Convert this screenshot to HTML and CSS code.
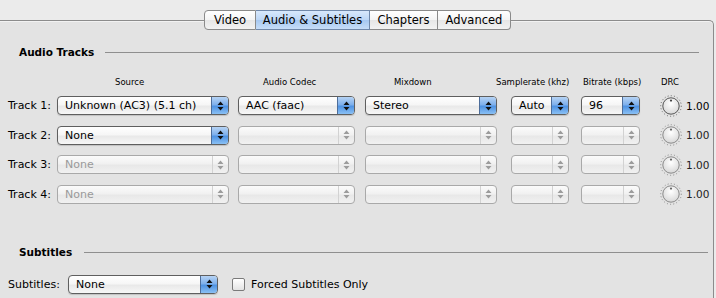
FILE: index.html
```html
<!DOCTYPE html>
<html lang="en">
<head>
    <meta charset="UTF-8">
    <title>Audio &amp; Subtitles</title>
    <link rel="stylesheet" href="styles.css">
</head>
<body>
    <div class="tabs">
        <span class="tab">Video</span>
        <span class="tab selected">Audio &amp; Subtitles</span>
        <span class="tab">Chapters</span>
        <span class="tab">Advanced</span>
    </div>

    <div class="panel">
        <div class="section-title audio-title">
            <span>Audio Tracks</span>
            <div class="rule"></div>
        </div>

        <div class="track-grid headers">
            <span></span>
            <span class="h-source">Source</span>
            <span class="h-codec">Audio Codec</span>
            <span class="h-mix">Mixdown</span>
            <span class="h-rate">Samplerate (khz)</span>
            <span class="h-bitrate">Bitrate (kbps)</span>
            <span class="h-drc">DRC</span>
        </div>

        <div class="track-grid tracks">
            <!-- Track 1 -->
            <span class="track-label">Track 1:</span>
            <div class="popup w-source"><span class="value">Unknown (AC3) (5.1 ch)</span><span class="arrows"><svg width="7" height="10" viewBox="0 0 7 10"><path d="M3.5 0.5L6.5 4H0.5Z M3.5 9.5L6.5 6H0.5Z"/></svg></span></div>
            <div class="popup w-codec"><span class="value">AAC (faac)</span><span class="arrows"><svg width="7" height="10" viewBox="0 0 7 10"><path d="M3.5 0.5L6.5 4H0.5Z M3.5 9.5L6.5 6H0.5Z"/></svg></span></div>
            <div class="popup w-mix"><span class="value">Stereo</span><span class="arrows"><svg width="7" height="10" viewBox="0 0 7 10"><path d="M3.5 0.5L6.5 4H0.5Z M3.5 9.5L6.5 6H0.5Z"/></svg></span></div>
            <div class="popup w-rate"><span class="value">Auto</span><span class="arrows"><svg width="7" height="10" viewBox="0 0 7 10"><path d="M3.5 0.5L6.5 4H0.5Z M3.5 9.5L6.5 6H0.5Z"/></svg></span></div>
            <div class="popup w-bitrate"><span class="value">96</span><span class="arrows"><svg width="7" height="10" viewBox="0 0 7 10"><path d="M3.5 0.5L6.5 4H0.5Z M3.5 9.5L6.5 6H0.5Z"/></svg></span></div>
            <div class="drc">
                <svg class="knob" width="22" height="22" viewBox="0 0 22 22"><defs><radialGradient id="knobfill" cx="0.5" cy="0.35" r="0.7"><stop offset="0" stop-color="#ffffff"/><stop offset="1" stop-color="#d4d4d4"/></radialGradient></defs><circle cx="11" cy="11" r="10.3" fill="none" stroke="#666" stroke-width="1" stroke-dasharray="1 2.2"/><circle cx="11" cy="11" r="8.2" fill="url(#knobfill)" stroke="#555" stroke-width="1"/><circle cx="11" cy="5.6" r="1.1" fill="#444"/></svg>
                <span>1.00</span>
            </div>

            <!-- Track 2 -->
            <span class="track-label">Track 2:</span>
            <div class="popup w-source"><span class="value">None</span><span class="arrows"><svg width="7" height="10" viewBox="0 0 7 10"><path d="M3.5 0.5L6.5 4H0.5Z M3.5 9.5L6.5 6H0.5Z"/></svg></span></div>
            <div class="popup w-codec disabled"><span class="value"></span><span class="arrows"><svg width="7" height="10" viewBox="0 0 7 10"><path d="M3.5 0.5L6.5 4H0.5Z M3.5 9.5L6.5 6H0.5Z"/></svg></span></div>
            <div class="popup w-mix disabled"><span class="value"></span><span class="arrows"><svg width="7" height="10" viewBox="0 0 7 10"><path d="M3.5 0.5L6.5 4H0.5Z M3.5 9.5L6.5 6H0.5Z"/></svg></span></div>
            <div class="popup w-rate disabled"><span class="value"></span><span class="arrows"><svg width="7" height="10" viewBox="0 0 7 10"><path d="M3.5 0.5L6.5 4H0.5Z M3.5 9.5L6.5 6H0.5Z"/></svg></span></div>
            <div class="popup w-bitrate disabled"><span class="value"></span><span class="arrows"><svg width="7" height="10" viewBox="0 0 7 10"><path d="M3.5 0.5L6.5 4H0.5Z M3.5 9.5L6.5 6H0.5Z"/></svg></span></div>
            <div class="drc off">
                <svg class="knob" width="22" height="22" viewBox="0 0 22 22"><circle cx="11" cy="11" r="10.3" fill="none" stroke="#888" stroke-width="1" stroke-dasharray="1 2.2"/><circle cx="11" cy="11" r="8.2" fill="url(#knobfill)" stroke="#8a8a8a" stroke-width="1"/><circle cx="11" cy="5.6" r="1.1" fill="#666"/></svg>
                <span>1.00</span>
            </div>

            <!-- Track 3 -->
            <span class="track-label">Track 3:</span>
            <div class="popup w-source disabled"><span class="value">None</span><span class="arrows"><svg width="7" height="10" viewBox="0 0 7 10"><path d="M3.5 0.5L6.5 4H0.5Z M3.5 9.5L6.5 6H0.5Z"/></svg></span></div>
            <div class="popup w-codec disabled"><span class="value"></span><span class="arrows"><svg width="7" height="10" viewBox="0 0 7 10"><path d="M3.5 0.5L6.5 4H0.5Z M3.5 9.5L6.5 6H0.5Z"/></svg></span></div>
            <div class="popup w-mix disabled"><span class="value"></span><span class="arrows"><svg width="7" height="10" viewBox="0 0 7 10"><path d="M3.5 0.5L6.5 4H0.5Z M3.5 9.5L6.5 6H0.5Z"/></svg></span></div>
            <div class="popup w-rate disabled"><span class="value"></span><span class="arrows"><svg width="7" height="10" viewBox="0 0 7 10"><path d="M3.5 0.5L6.5 4H0.5Z M3.5 9.5L6.5 6H0.5Z"/></svg></span></div>
            <div class="popup w-bitrate disabled"><span class="value"></span><span class="arrows"><svg width="7" height="10" viewBox="0 0 7 10"><path d="M3.5 0.5L6.5 4H0.5Z M3.5 9.5L6.5 6H0.5Z"/></svg></span></div>
            <div class="drc off">
                <svg class="knob" width="22" height="22" viewBox="0 0 22 22"><circle cx="11" cy="11" r="10.3" fill="none" stroke="#888" stroke-width="1" stroke-dasharray="1 2.2"/><circle cx="11" cy="11" r="8.2" fill="url(#knobfill)" stroke="#8a8a8a" stroke-width="1"/><circle cx="11" cy="5.6" r="1.1" fill="#666"/></svg>
                <span>1.00</span>
            </div>

            <!-- Track 4 -->
            <span class="track-label">Track 4:</span>
            <div class="popup w-source disabled"><span class="value">None</span><span class="arrows"><svg width="7" height="10" viewBox="0 0 7 10"><path d="M3.5 0.5L6.5 4H0.5Z M3.5 9.5L6.5 6H0.5Z"/></svg></span></div>
            <div class="popup w-codec disabled"><span class="value"></span><span class="arrows"><svg width="7" height="10" viewBox="0 0 7 10"><path d="M3.5 0.5L6.5 4H0.5Z M3.5 9.5L6.5 6H0.5Z"/></svg></span></div>
            <div class="popup w-mix disabled"><span class="value"></span><span class="arrows"><svg width="7" height="10" viewBox="0 0 7 10"><path d="M3.5 0.5L6.5 4H0.5Z M3.5 9.5L6.5 6H0.5Z"/></svg></span></div>
            <div class="popup w-rate disabled"><span class="value"></span><span class="arrows"><svg width="7" height="10" viewBox="0 0 7 10"><path d="M3.5 0.5L6.5 4H0.5Z M3.5 9.5L6.5 6H0.5Z"/></svg></span></div>
            <div class="popup w-bitrate disabled"><span class="value"></span><span class="arrows"><svg width="7" height="10" viewBox="0 0 7 10"><path d="M3.5 0.5L6.5 4H0.5Z M3.5 9.5L6.5 6H0.5Z"/></svg></span></div>
            <div class="drc off">
                <svg class="knob" width="22" height="22" viewBox="0 0 22 22"><circle cx="11" cy="11" r="10.3" fill="none" stroke="#888" stroke-width="1" stroke-dasharray="1 2.2"/><circle cx="11" cy="11" r="8.2" fill="url(#knobfill)" stroke="#8a8a8a" stroke-width="1"/><circle cx="11" cy="5.6" r="1.1" fill="#666"/></svg>
                <span>1.00</span>
            </div>
        </div>

        <div class="section-title subs-title">
            <span>Subtitles</span>
            <div class="rule"></div>
        </div>

        <div class="subs-row">
            <span class="subs-label">Subtitles:</span>
            <div class="popup w-subs"><span class="value">None</span><span class="arrows"><svg width="7" height="10" viewBox="0 0 7 10"><path d="M3.5 0.5L6.5 4H0.5Z M3.5 9.5L6.5 6H0.5Z"/></svg></span></div>
            <label class="check"><span class="box"></span>Forced Subtitles Only</label>
        </div>
    </div>
</body>
</html>
```

FILE: styles.css
```css
html, body {
    height: 298px;
    overflow: hidden;
}
body {
    margin: 0;
    background: #ebebeb;
    font-family: 'DejaVu Sans', 'Liberation Sans', sans-serif;
    font-size: 11px;
    color: #000;
}

/* segmented tab control */
.tabs {
    display: flex;
    margin: 10px 0 0 204px;
    height: 20px;
    position: relative;
    z-index: 1;
}
.tab {
    display: flex;
    align-items: center;
    justify-content: center;
    height: 18px;
    border: 1px solid #8a8a8a;
    border-left: none;
    background: linear-gradient(#ffffff 0%, #f4f4f4 50%, #e6e6e6 51%, #f2f2f2 100%);
    font-size: 11.5px;
}
.tab:nth-child(1) { width: 50px; border-left: 1px solid #8a8a8a; border-radius: 4px 0 0 4px; }
.tab:nth-child(2) { width: 113px; }
.tab:nth-child(3) { width: 67px; }
.tab:nth-child(4) { width: 72px; border-radius: 0 4px 4px 0; }
.tab.selected {
    background: linear-gradient(#d8e8fb 0%, #bcd6f6 50%, #a6c8f1 51%, #c6ddf8 100%);
    border-color: #7088aa;
}

/* tab view box */
.panel {
    margin: -10px 2px 0 -10px;
    padding-left: 10px;
    border: 1px solid #8c8c8c;
    border-bottom: none;
    border-radius: 5px 5px 0 0;
    background: #e3e3e3;
    height: 278px;
    box-shadow: inset 0 1px 0 #f2f2f2;
}

.section-title {
    display: flex;
    align-items: center;
    font-weight: bold;
    font-size: 10.5px;
    line-height: 13px;
}
.section-title .rule {
    flex: 1;
    height: 0;
    border-top: 1px solid #8f8f8f;
    margin-left: 11px;
}
.audio-title { padding: 25px 14px 0 18px; }
.subs-title { padding: 42px 5px 0 18px; }
.subs-title .rule { margin-left: 12px; }

/* tracks table */
.track-grid {
    display: grid;
    grid-template-columns: 56px 181px 127px 146px 70px 79px 1fr;
}
.headers {
    margin-top: 16px;
    font-size: 8.5px;
    line-height: 14px;
    white-space: nowrap;
}
.h-source { padding-left: 58px; }
.h-codec { padding-left: 25px; }
.h-mix { padding-left: 29px; }
.h-rate { margin-left: -15px; }
.h-bitrate { padding-left: 2px; }
.h-drc { padding-left: 1px; }

.tracks {
    margin-top: 7px;
    grid-auto-rows: 19px;
    row-gap: 10.5px;
    align-items: center;
}
.track-label {
    text-align: right;
    padding-right: 6px;
    font-size: 11px;
}

/* pop-up buttons */
.popup {
    display: flex;
    height: 17px;
    border: 1px solid #5f5f5f;
    border-radius: 4px;
    background: linear-gradient(#ffffff 0%, #f6f6f6 45%, #e9e9e9 55%, #f7f7f7 100%);
    box-shadow: 0 1px 1px rgba(0,0,0,0.15);
    overflow: hidden;
}
.popup .value {
    flex: 1;
    padding-left: 7px;
    line-height: 17px;
    font-size: 11px;
    white-space: nowrap;
}
.popup .arrows {
    width: 16px;
    display: flex;
    align-items: center;
    justify-content: center;
    border-left: 1px solid #4d6d9a;
    background: linear-gradient(#b6d3f4 0%, #7eb0ec 45%, #4f93e3 55%, #8ac0f4 100%);
}
.popup .arrows svg { fill: #111; }

.popup.disabled {
    border-color: #a9a9a9;
    background: linear-gradient(#fbfbfb 0%, #f1f1f1 45%, #e8e8e8 55%, #f1f1f1 100%);
    box-shadow: none;
    color: #9a9a9a;
}
.popup.disabled .arrows {
    background: transparent;
    border-left: 1px solid #d2d2d2;
    width: 15px;
}
.popup.disabled .arrows svg { fill: #9c9c9c; }

.w-source { width: 170px; }
.w-codec { width: 115px; }
.w-mix { width: 130px; }
.w-rate { width: 56px; }
.w-bitrate { width: 57px; }
.w-subs { width: 148px; }

.drc {
    display: flex;
    align-items: center;
}
.drc span {
    margin-left: 4px;
    font-size: 10.5px;
}
.drc.off span { color: #222; }

/* subtitles row */
.subs-row {
    display: flex;
    align-items: center;
    margin-top: 16px;
    padding-left: 7px;
}
.subs-label {
    font-size: 11px;
    width: 60px;
}
.check {
    display: flex;
    align-items: center;
    margin-left: 14px;
    font-size: 11px;
}
.check .box {
    width: 11px;
    height: 11px;
    border: 1px solid #7a7a7a;
    border-radius: 2px;
    background: linear-gradient(#ffffff, #e4e4e4);
    margin-right: 6px;
}
```
